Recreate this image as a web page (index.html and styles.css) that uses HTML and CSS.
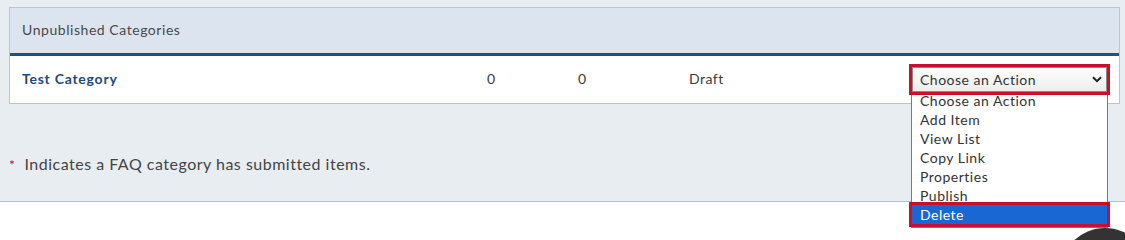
FILE: index.html
```html
<!DOCTYPE html>
<html>
<head>
<meta charset="utf-8">
<link rel="stylesheet" href="styles.css">
</head>
<body>
<div class="panel">
  <div class="table">
    <div class="thead">Unpublished Categories</div>
    <div class="row">
      <div class="name">Test Category</div>
      <div class="num">0</div>
      <div class="num">0</div>
      <div class="status">Draft</div>
      <div class="action">
        <div class="select">
          <span>Choose an Action</span>
          <svg class="chev" width="10" height="7" viewBox="0 0 10 7"><path d="M1 1.2 L5 5.2 L9 1.2" fill="none" stroke="#222" stroke-width="2"/></svg>
        </div>
      </div>
    </div>
  </div>
  <p class="note"><span class="star">*</span>Indicates a FAQ category has submitted items.</p>
</div>
<ul class="menu">
  <li>Choose an Action</li>
  <li>Add Item</li>
  <li>View List</li>
  <li>Copy Link</li>
  <li>Properties</li>
  <li>Publish</li>
  <li class="sel">Delete</li>
</ul>
<div class="chat"><div class="dot"></div></div>
</body>
</html>
```
FILE: styles.css
```css
html, body {
  margin: 0;
  padding: 0;
  background: #ffffff;
  font-family: Lato, "Open Sans", Arial, sans-serif;
  overflow: hidden;
  height: 237px;
}
.panel {
  background: #e8edf2;
  height: 194px;
  padding: 7px 5px 0 9px;
  border-bottom: 1px solid #b5bfca;
}
.table {
  background: #fff;
  border: 1px solid #b9c5d3;
}
.thead {
  background: #dbe4ef;
  height: 45px;
  line-height: 44px;
  padding-left: 12px;
  font-size: 14px;
  letter-spacing: 0.55px;
  color: #4a4a4a;
  border-bottom: 3px solid #1c5383;
}
.row {
  box-sizing: border-box;
  display: grid;
  grid-template-columns: 465px 91px 111px 220px 201px;
  align-items: center;
  height: 47px;
  padding: 0 0 2px 12px;
  font-size: 14px;
  letter-spacing: 0.5px;
  color: #3a3a3a;
}
.name {
  font-weight: 700;
  letter-spacing: 0.75px;
  color: #1d4b77;
}
.action {
  position: relative;
  z-index: 3;
}
.select {
  box-sizing: border-box;
  height: 31px;
  margin-top: 1px;
  border: 3px solid #c8102e;
  background: linear-gradient(#ffffff, #ececec);
  box-shadow: inset 0 0 0 1px #8a8a8a;
  display: flex;
  align-items: center;
  justify-content: space-between;
  padding: 0 5px 0 8px;
  font-size: 14px;
  color: #333;
}
.chev {
  display: block;
}
.note {
  margin: 50px 0 0 0;
  font-size: 16px;
  letter-spacing: 0.5px;
  color: #444;
}
.star {
  color: #c8102e;
  margin-right: 9px;
  font-size: 14px;
}
.menu {
  position: absolute;
  left: 911px;
  top: 90px;
  width: 195px;
  margin: 0;
  padding: 0;
  list-style: none;
  background: #fff;
  border: 1px solid #7a7a7a;
  z-index: 2;
  font-size: 14px;
  letter-spacing: 0.5px;
  color: #333;
}
.menu li {
  height: 19px;
  line-height: 19px;
  padding-left: 8px;
}
.menu li.sel {
  background: #1967d2;
  color: #fff;
  outline: 3px solid #c8102e;
  position: relative;
  margin: 0 0 3px 0;
}
.chat {
  position: absolute;
  right: 0;
  bottom: 0;
  width: 65px;
  height: 12px;
  overflow: hidden;
}
.dot {
  width: 90px;
  height: 90px;
  border-radius: 50%;
  background: #333;
}
```
